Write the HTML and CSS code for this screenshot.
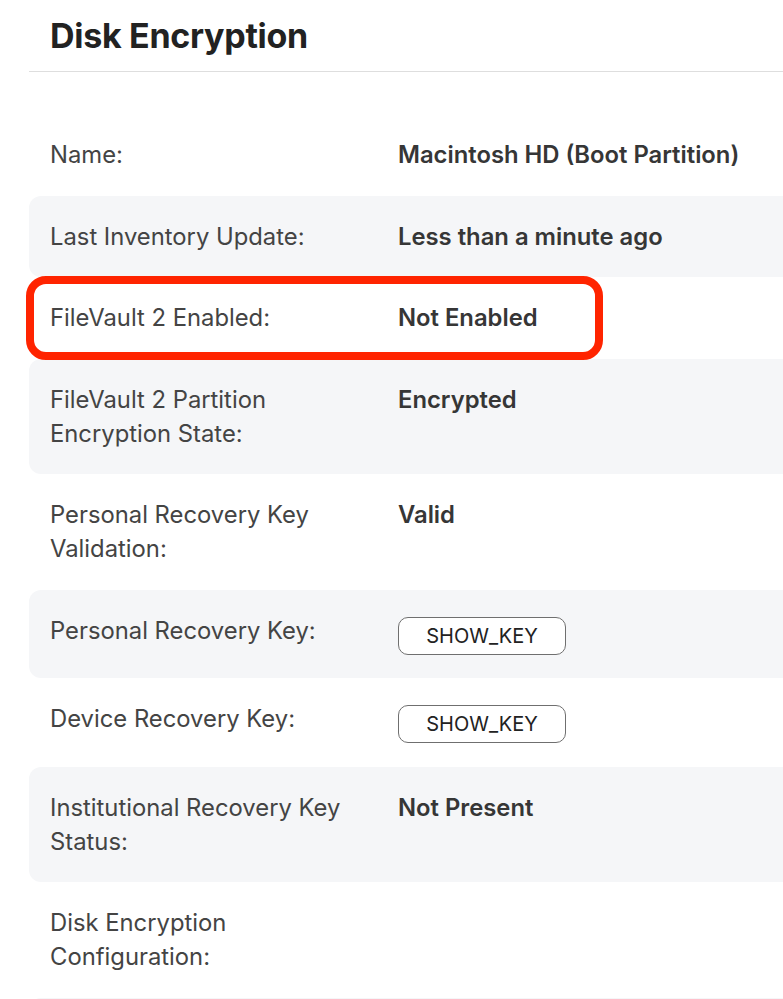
FILE: index.html
```html
<!DOCTYPE html>
<html lang="en">
<head>
<meta charset="utf-8">
<title>Disk Encryption</title>
<link rel="stylesheet" href="styles.css">
</head>
<body>
<div class="page">
  <h1 class="title">Disk Encryption</h1>
  <div class="divider"></div>
  <div class="rows">
    <div class="row">
      <div class="label">Name:</div>
      <div class="value">Macintosh HD (Boot Partition)</div>
    </div>
    <div class="row shaded">
      <div class="label">Last Inventory Update:</div>
      <div class="value">Less than a minute ago</div>
    </div>
    <div class="row">
      <div class="label">FileVault 2 Enabled:</div>
      <div class="value">Not Enabled</div>
    </div>
    <div class="row shaded">
      <div class="label">FileVault 2 Partition<br>Encryption State:</div>
      <div class="value">Encrypted</div>
    </div>
    <div class="row">
      <div class="label">Personal Recovery Key<br>Validation:</div>
      <div class="value">Valid</div>
    </div>
    <div class="row shaded">
      <div class="label">Personal Recovery Key:</div>
      <div class="value"><button class="key-btn" type="button">SHOW_KEY</button></div>
    </div>
    <div class="row">
      <div class="label">Device Recovery Key:</div>
      <div class="value"><button class="key-btn" type="button">SHOW_KEY</button></div>
    </div>
    <div class="row shaded">
      <div class="label">Institutional Recovery Key<br>Status:</div>
      <div class="value">Not Present</div>
    </div>
    <div class="row">
      <div class="label">Disk Encryption<br>Configuration:</div>
      <div class="value"></div>
    </div>
    <div class="row shaded"></div>
    <div class="highlight"></div>
  </div>
</div>
</body>
</html>
```

FILE: styles.css
```css
html, body {
  margin: 0;
  padding: 0;
  background: #ffffff;
  overflow: hidden;
}

body {
  font-family: Inter, "Noto Sans", "Liberation Sans", sans-serif;
  color: #333333;
}

.page {
  padding-left: 29px;
  height: 999px;
  overflow: hidden;
}

.title {
  margin: 16px 0 15px 21px;
  font-size: 34px;
  line-height: 40px;
  font-weight: 700;
  color: #222222;
  letter-spacing: -0.3px;
}

.divider {
  height: 1px;
  background: #dedede;
}

.rows {
  position: relative;
  margin-top: 42px;
  width: calc(100% + 40px);
}

.row {
  display: grid;
  grid-template-columns: 348px 1fr;
  padding: 24px 0 23.5px 21px;
  min-height: 34px;
  border-radius: 12px 0 0 12px;
}

.row.shaded {
  background: #f5f6f8;
}

.label {
  font-size: 23.8px;
  line-height: 34px;
  font-weight: 400;
  color: #444444;
}

.value {
  font-size: 23.8px;
  line-height: 34px;
  font-weight: 600;
  color: #363636;
}

.key-btn {
  display: block;
  margin-top: 3px;
  width: 168px;
  height: 38px;
  padding: 0;
  border: 1.5px solid #6f6f6f;
  border-radius: 10px;
  background: #ffffff;
  font-family: Inter, "Noto Sans", "Liberation Sans", sans-serif;
  font-size: 20px;
  font-weight: 400;
  color: #222222;
}

.highlight {
  position: absolute;
  left: -3px;
  top: 162px;
  width: 577px;
  height: 84px;
  box-sizing: border-box;
  border: 8px solid #ff2400;
  border-radius: 20px;
  pointer-events: none;
}
```
